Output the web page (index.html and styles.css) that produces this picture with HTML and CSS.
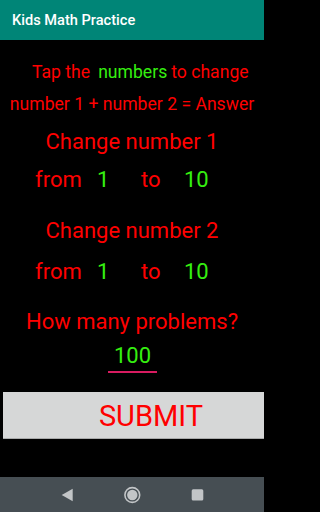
FILE: index.html
```html
<!DOCTYPE html>
<html>
<head>
<meta charset="utf-8">
<link rel="stylesheet" href="styles.css">
</head>
<body>
<div class="screen">
  <header class="toolbar"><span class="title">Kids Math Practice</span></header>
  <main class="content">
    <div class="line1"><span class="red">Tap the</span><span class="green sp1">numbers</span><span class="red sp2">to change</span></div>
    <div class="line2 red">number 1 + number 2 = Answer</div>
    <div class="heading red h1">Change number 1</div>
    <div class="range r1"><span class="red c1">from</span><span class="green c2">1</span><span class="red c3">to</span><span class="green">10</span></div>
    <div class="heading red h2">Change number 2</div>
    <div class="range r2"><span class="red c1">from</span><span class="green c2">1</span><span class="red c3">to</span><span class="green">10</span></div>
    <div class="heading red h3">How many problems?</div>
    <div class="inputrow"><span class="input green">100</span></div>
    <div class="btn">SUBMIT</div>
  </main>
  <nav class="navbar">
    <svg width="264" height="35" viewBox="0 0 264 35">
      <polygon points="72.7,11.7 61.7,18 72.7,24.3" fill="#c2c5c7"/>
      <circle cx="132.3" cy="18" r="7.4" fill="none" stroke="#c2c5c7" stroke-width="1.6"/>
      <circle cx="132.3" cy="18" r="5.2" fill="#c2c5c7"/>
      <rect x="191.7" y="12.3" width="11.6" height="11.2" rx="1.5" fill="#c2c5c7"/>
    </svg>
  </nav>
</div>
</body>
</html>
```

FILE: styles.css
```css
html, body {
  margin: 0;
  padding: 0;
  background: #000;
}
body {
  width: 264px;
  height: 512px;
  overflow: hidden;
  font-family: Roboto, "Liberation Sans", sans-serif;
}
.screen {
  display: flex;
  flex-direction: column;
  height: 512px;
}
.toolbar {
  height: 40px;
  flex: none;
  background: #008577;
  display: flex;
  align-items: center;
  padding-left: 12px;
}
.title {
  color: #fff;
  font-size: 14.6px;
  font-weight: 500;
}
.content {
  flex: 1;
  padding-top: 16px;
}
.red { color: #ff0000; }
.green { color: #35ef10; }
.line1 {
  display: flex;
  padding-left: 32px;
  font-size: 17.6px;
  line-height: 32px;
  white-space: nowrap;
}
.sp1 { margin-left: 8px; }
.sp2 { margin-left: 4px; }
.line2 {
  font-size: 17.6px;
  line-height: 32px;
  text-align: center;
  white-space: nowrap;
}
.heading {
  font-size: 22px;
  line-height: 32px;
  text-align: center;
  white-space: nowrap;
}
.h1 { margin-top: 6px; }
.h2 { margin-top: 19px; }
.h3 { margin-top: 17.5px; }
.range {
  display: flex;
  padding-left: 35px;
  font-size: 22px;
  line-height: 32px;
  margin-top: 6px;
}
.r2 { margin-top: 9px; }
.c1 { width: 62px; }
.c2 { width: 44px; }
.c3 { width: 43px; }
.inputrow {
  display: flex;
  justify-content: center;
  margin-top: 2.8px;
}
.input {
  width: 49px;
  text-align: center;
  font-size: 22px;
  line-height: 31px;
  border-bottom: 2px solid #d81b60;
  margin-left: 1px;
}
.btn {
  margin-top: 18.7px;
  margin-left: 3px;
  width: 296px;
  height: 47px;
  box-sizing: border-box;
  background: #d6d7d7;
  border-bottom: 1px solid #a9aaaa;
  color: #ff0000;
  font-size: 29px;
  display: flex;
  align-items: center;
  justify-content: center;
  padding-top: 2px;
}
.navbar {
  height: 35px;
  flex: none;
  background: #464e53;
}
.navbar svg { display: block; }
```
